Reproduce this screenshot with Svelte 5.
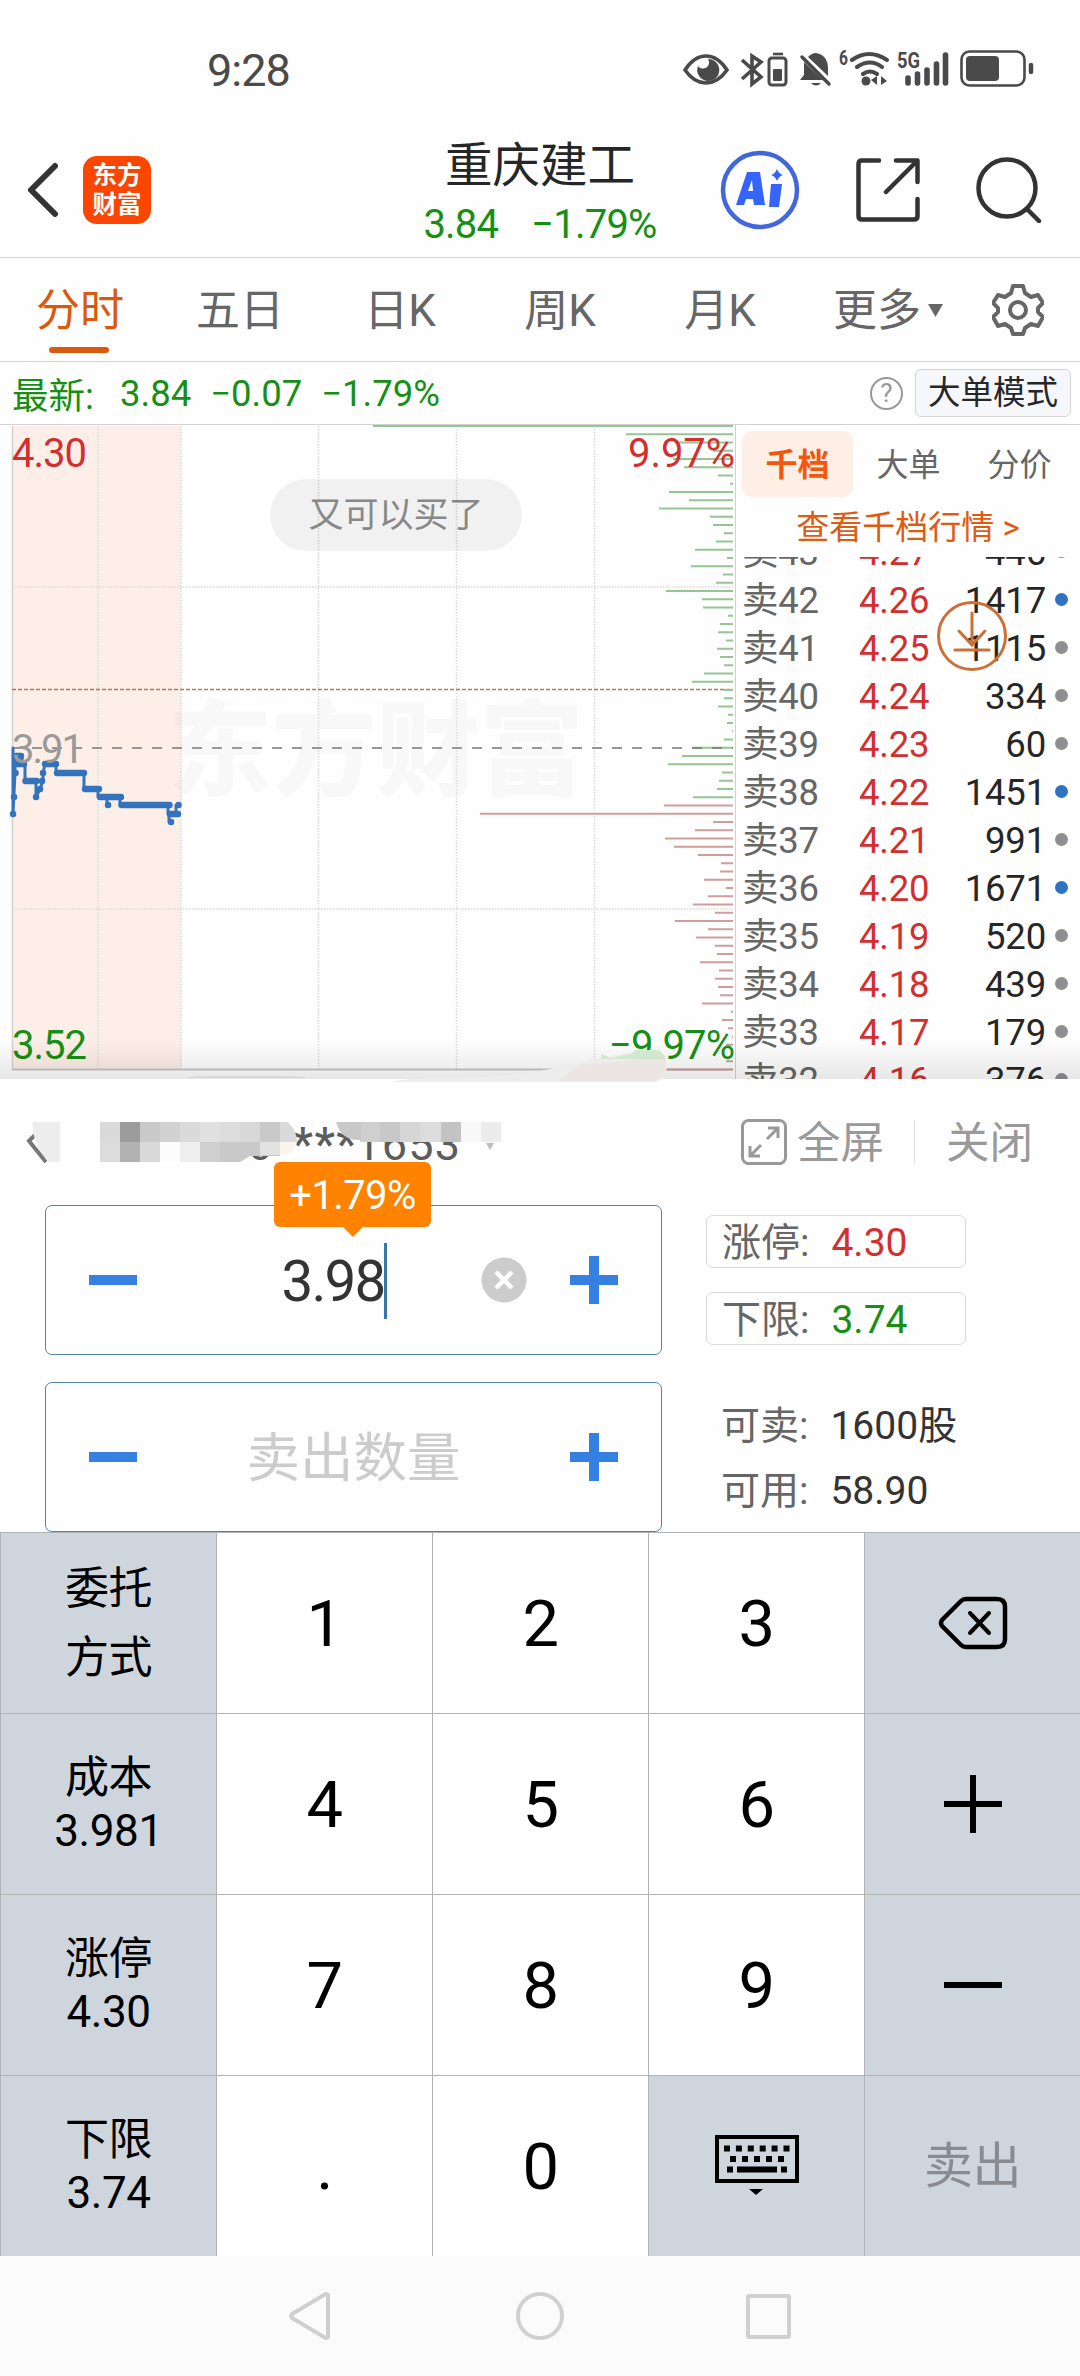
<script lang="ts">
  const TABS = ["分时", "五日", "日K", "周K", "月K"];

  // Volume at each price level, from the daily high down to the low
  const VOLUMES = [
    360, 107, 54, 20, 60, 49, 15, 3, 64, 44, 74, 23, 20, 9, 17, 38, 6, 42, 10,
    17, 67, 31, 30, 5, 13, 15, 7, 16, 13, 9, 29, 41, 9, 9, 15, 5, 6, 1, 9, 41,
    51, 65, 11, 14, 16, 40, 69, 253, 20, 38, 68, 59, 35, 12, 13, 29, 7, 25, 40,
    18, 58, 25, 37, 18, 16, 33, 14, 18, 15, 13, 31, 2, 11, 5, 1, 7, 2, 7, 110,
  ];
  const FIRST_BUY = 46;

  const ORDERS = [
    { level: 43, price: "4.27", volume: 446, big: false },
    { level: 42, price: "4.26", volume: 1417, big: true },
    { level: 41, price: "4.25", volume: 1115, big: false },
    { level: 40, price: "4.24", volume: 334, big: false },
    { level: 39, price: "4.23", volume: 60, big: false },
    { level: 38, price: "4.22", volume: 1451, big: true },
    { level: 37, price: "4.21", volume: 991, big: false },
    { level: 36, price: "4.20", volume: 1671, big: true },
    { level: 35, price: "4.19", volume: 520, big: false },
    { level: 34, price: "4.18", volume: 439, big: false },
    { level: 33, price: "4.17", volume: 179, big: false },
    { level: 32, price: "4.16", volume: 376, big: false },
  ];

  const KEYS = [
    { lines: ["委托", "方式"], kind: "side tall" },
    { lines: ["1"], kind: "digit" },
    { lines: ["2"], kind: "digit" },
    { lines: ["3"], kind: "digit" },
    { icon: "delete", kind: "side" },
    { lines: ["成本", "3.981"], kind: "side" },
    { lines: ["4"], kind: "digit" },
    { lines: ["5"], kind: "digit" },
    { lines: ["6"], kind: "digit" },
    { icon: "plus", kind: "side" },
    { lines: ["涨停", "4.30"], kind: "side" },
    { lines: ["7"], kind: "digit" },
    { lines: ["8"], kind: "digit" },
    { lines: ["9"], kind: "digit" },
    { icon: "minus", kind: "side" },
    { lines: ["下限", "3.74"], kind: "side" },
    { lines: ["."], kind: "digit" },
    { lines: ["0"], kind: "digit" },
    { icon: "keyboard", kind: "side" },
    { lines: ["卖出"], kind: "side sell" },
  ];

  // Masked account name: x, y, width, colour
  const MOSAIC: [number, number, number, string][] = [
    [100, 0, 20, "#dadada"], [120, 0, 20, "#9c9c9c"], [140, 0, 20, "#c9c9c9"],
    [160, 0, 20, "#d2d2d2"], [180, 0, 20, "#dadada"], [200, 0, 20, "#e0e0e0"],
    [220, 0, 20, "#dcdcdc"], [240, 0, 20, "#d8d8d8"], [260, 0, 20, "#c9c9c9"],
    [100, 20, 20, "#dcdcdc"], [120, 20, 20, "#b2b2b2"], [140, 20, 20, "#dadada"],
    [160, 20, 20, "#fcfcfc"], [180, 20, 20, "#eeeeee"], [200, 20, 20, "#cfcfcf"],
    [360, 0, 20, "#cfcfcf"], [380, 0, 20, "#c8c8c8"], [400, 0, 20, "#d6d6d6"],
    [420, 0, 21, "#dcdcdc"], [441, 0, 20, "#c3c3c3"], [461, 0, 20, "#f8f8f8"],
    [481, 0, 20, "#ececec"],
  ];

  let price = $state("3.98");
</script>

<div class="screen">
  <div class="status">
    <span class="clock">9:28</span>
    <svg class="status-icons" viewBox="680 46 356 44" width="356" height="44">
      <g fill="none" stroke="#4a4a4a" stroke-width="3.6">
        <path d="M685 70q9-14 21-14t21 14q-9 13-21 13t-21-13z" />
        <path d="M742 60l19 17-9 7V56l9 6-19 17" />
        <rect x="769" y="58" width="17" height="27" rx="3" stroke-width="3" />
        <path d="M773 54h10" stroke-width="2.6" />
        <path d="M852 60q17-12 35 0M857 67q13-9 25 0M863 74q7-5 14 0" stroke-width="4" stroke-linecap="round" />
        <rect x="961.5" y="51.5" width="63" height="34" rx="8" stroke-width="2.6" />
        <path d="M1031 65v7" stroke-width="4.5" stroke-linecap="round" />
        <path d="M908 78v5M917.5 74v9M927 70v13M936.5 64v19M945.5 55v28" stroke-width="5.6" stroke-linecap="round" />
      </g>
      <g fill="#4a4a4a">
        <path d="M698 66a11 11 0 1 0 10-7 6 6 0 1 1-10 7z" />
        <rect x="773" y="69" width="9" height="12" rx="1" />
        <path d="M808 57q4-4 8-4 12 2 12 16v7L808 57zM804 62l19 18h-23l4-5z" />
        <path d="M811 83h10q-5 5-10 0z" />
        <path d="M802 57l27 27" stroke="#4a4a4a" stroke-width="3.5" stroke-linecap="round" />
        <circle cx="866" cy="81" r="4.5" />
        <path d="M877 76v9l-6-5zM881 76l6 5-6 4z" />
        <rect x="966" y="56" width="33" height="25" rx="4" />
        <text x="839" y="65" font-size="20" font-weight="700" textLength="9" lengthAdjust="spacingAndGlyphs">6</text>
        <text x="897" y="68" font-size="22" font-weight="700" textLength="23" lengthAdjust="spacingAndGlyphs">5G</text>
      </g>
    </svg>
  </div>

  <header class="titlebar">
    <div class="title-left">
      <svg viewBox="0 0 32 56" width="32" height="56" fill="none" stroke="#333" stroke-width="6" stroke-linecap="round" stroke-linejoin="round">
        <path d="M28 4L4 28l24 24" />
      </svg>
      <div class="logo"><span>东方</span><span>财富</span></div>
    </div>
    <div class="title">
      <div class="name">重庆建工</div>
      <div class="quote"><span>3.84</span><span>−1.79%</span></div>
    </div>
    <div class="title-right">
      <svg viewBox="0 0 80 80" width="80" height="80">
        <circle cx="40" cy="40" r="37" fill="none" stroke="#4267dc" stroke-width="4.5" />
        <path d="M16 55L27 22h13l5 33H34l-1-6h-7l-2 6zM28 41h5l-1-11z" fill="#3564fa" fill-rule="evenodd" />
        <path d="M51 34h11l-3 23H49z" fill="#3564fa" />
        <path d="M57 19q2 5 6 6-4 1-6 6-2-5-6-6 4-1 6-6z" fill="#3564fa" />
      </svg>
      <svg viewBox="0 0 64 64" width="64" height="64" fill="none" stroke="#333" stroke-width="4.5" stroke-linecap="round" stroke-linejoin="round">
        <path d="M23 2.500H6Q2.500 2.500 2.500 6v52Q2.500 61.500 6 61.500h52q3.500 0 3.500-3.500V41" />
        <path d="M40 2.500h21.500V24M61 3L30 34" />
      </svg>
      <svg viewBox="0 0 66 66" width="66" height="66" fill="none" stroke="#333" stroke-width="4.5" stroke-linecap="round">
        <circle cx="31" cy="31" r="28.5" />
        <path d="M51 52l12 12" />
      </svg>
    </div>
  </header>

  <nav class="tabs">
    {#each TABS as tab, i}
      <span class="tab" class:active={i === 0}>{tab}</span>
    {/each}
    <span class="more">
      更多<svg viewBox="0 0 16 14" width="15" height="13"><path d="M0 0h16L8 14z" fill="#666" /></svg>
    </span>
    <svg class="gear" viewBox="-26 -26 52 52" width="52" height="52" fill="none" stroke="#666" stroke-width="4">
      <path d="M-5-24H5l2 7 6 4 7-2 5 8-5 5v4l5 5-5 9-7-2-6 4-2 6H-5l-2-6-6-4-7 2-5-9 5-5v-4l-5-5 5-8 7 2 6-4z" stroke-linejoin="round" />
      <circle r="8" />
    </svg>
  </nav>

  <div class="latest">
    <span class="label">最新:</span><span>3.84</span><span>−0.07</span><span>−1.79%</span>
    <i class="help">?</i>
    <button class="mode">大单模式</button>
  </div>

  <main class="market">
    <svg class="chart" viewBox="0 425 735 654" width="735" height="654">
      <rect x="12" y="426" width="169" height="643" fill="#fdeee7" />
      <text class="watermark" x="168" y="788" textLength="416">东方财富</text>
      <g stroke="#d9d9d9" stroke-width="1.5" stroke-dasharray="1.5 1.5">
        <path d="M98 426v643M181 426v643M318.500 426v643M456.500 426v643M594.500 426v643" />
        <path d="M12 587h721M12 909h721" />
      </g>
      <path d="M12.500 426v643" stroke="#d3d1d0" stroke-width="1.5" />
      <path d="M12 1069.500h721" stroke="#c6c6c6" stroke-width="2" />
      <path d="M12 689.500h721" stroke="#b9784f" stroke-width="1.4" stroke-dasharray="4 2" />
      {#each VOLUMES as width, i}
        <rect
          x={733 - width}
          y={425 + i * 8.25}
          {width}
          height="2"
          fill={i < FIRST_BUY ? "#95c495" : "#d09c9c"}
        />
      {/each}
      <path d="M12 748h721" stroke="#777" stroke-width="1.6" stroke-dasharray="10 10" />
      <rect x="270" y="479" width="252" height="72" rx="36" fill="#000" fill-opacity="0.05" />
      <text x="396" y="527" text-anchor="middle" font-size="35" fill="#888">又可以买了</text>
      <g fill="none" stroke="#3373bd" stroke-linecap="round" stroke-linejoin="round">
        <path
          d="M13 748v66l2-41v-18h7v9h3v17h11v16l4-8 3-8v-8l2-9h11v9h28v16h14v8h9v8v-8h13v8h48v9h1v8v-8h7v-9"
          stroke-width="3"
        />
        <path
          d="M13 814h.1M14 797h.1M15.500 773h.1M16 756h5M16 764h8M25.500 781h11M36 797h.1M40 789h.1M42 781h.1M43 773h.1M45 764h11M57 773h27M85 789h14M100 797h21M108 805h.1M121.500 805h48M170 814h8M171 822h.1M178.500 805h.1"
          stroke-width="6.4"
        />
      </g>
      <g class="axis">
        <text x="12" y="467" fill="#d32f2f" textLength="75">4.30</text>
        <text x="12" y="763" fill="#999" textLength="72">3.91</text>
        <text x="12" y="1059" fill="#159015" textLength="75">3.52</text>
        <text x="628" y="467" fill="#d32f2f" textLength="107">9.97%</text>
        <text x="609" y="1059" fill="#159015" textLength="126">−9.97%</text>
      </g>
    </svg>

    <section class="book">
      <div class="book-tabs">
        <span class="active">千档</span><span>大单</span><span>分价</span>
      </div>
      <div class="book-link">查看千档行情 &gt;</div>
      <div class="orders">
        {#each ORDERS as order}
          <div class="order">
            <span class="level">卖{order.level}</span>
            <span class="price">{order.price}</span>
            <span class="volume">{order.volume}</span>
            <span class="dot" class:big={order.big}></span>
          </div>
        {/each}
      </div>
      <svg class="jump" viewBox="-36 -36 72 72" width="72" height="72" fill="none" stroke="#cc7038" stroke-width="3" stroke-linecap="round">
        <circle r="33.5" />
        <path d="M0-23V9M-13-5L0 9 13-5M-17 14h34" />
      </svg>
    </section>
    <div class="shade"></div>
  </main>

  <section class="sheet">
    <div class="sheet-head">
      <svg class="back" viewBox="0 0 34 46" width="34" height="46" fill="none" stroke="#777" stroke-width="4"><path d="M20 6L5 21l17 21" /></svg>
      <span class="account">6<b>***</b>1653</span>
      <svg class="mask" viewBox="0 1050 700 120" width="700" height="120">
        <path d="M392 1082q10-4 60-4 70-1 110-12l50-10 45-9q10 8 10 20-2 14-12 15z" fill="#ededed" />
        <path d="M560 1081q5-7 22-16l60-6 24 0q1 20-12 22z" fill="#ede4e4" />
        <path d="M601 1058v-4l10 4 20-4 8-7q22-1 27 12h-65z" fill="#cfe8cf" />
        <path d="M186 1078q3-2 30-2h60q27 0 32 2z" fill="#d6d6d6" />
        <path d="M33 1122h27v40H48q-18-24-15-40z" fill="#ededed" />
        {#each MOSAIC as [x, y, w, fill]}
          <rect {x} y={1122 + y} width={w} height="20" {fill} />
        {/each}
        <path d="M220 1142h60v14h-30l-10 6h-20z" fill="#c9c9c9" />
        <path d="M260 1142h20v13h-20z" fill="#e2e2e2" />
        <path d="M280 1122h8q9 9 9 20h-17z" fill="#dadada" />
        <path d="M280 1142h17q-2 12-17 13z" fill="#fbf4ea" />
        <path d="M336 1122h25v18q-20 1-25-18z" fill="#c8c8c8" />
        <path d="M486 1143h8l-4 7z" fill="#bdbdbd" />
      </svg>
      <svg viewBox="0 0 46 46" width="46" height="46" fill="none" stroke="#999" stroke-width="3">
        <rect x="1.5" y="1.5" width="43" height="43" rx="6" />
        <path d="M26 20L37 9M27 9h10v10M20 26L9 37M9 27v10h10" />
      </svg>
      <span class="full">全屏</span>
      <span class="divider"></span>
      <span class="close">关闭</span>
    </div>

    <div class="form">
      <div class="steppers">
        <div class="stepper">
          <span class="minus"></span>
          <span class="value">{price}</span>
          <span class="caret"></span>
          <svg class="clear" viewBox="-23 -23 46 46" width="46" height="46">
            <circle r="22.5" fill="#ccc" />
            <path d="M-8-8L8 8M8-8L-8 8" stroke="#fff" stroke-width="4.5" />
          </svg>
          <span class="plus"></span>
          <div class="tip">+1.79%</div>
        </div>
        <div class="stepper">
          <span class="minus"></span>
          <span class="placeholder">卖出数量</span>
          <span class="plus"></span>
        </div>
      </div>
      <div class="limits">
        <div class="limit">涨停:<span class="up">4.30</span></div>
        <div class="limit">下限:<span class="down">3.74</span></div>
        <div class="holding first">可卖:<span>1600股</span></div>
        <div class="holding">可用:<span>58.90</span></div>
      </div>
    </div>
  </section>

  <div class="keypad">
    {#each KEYS as key}
      <button class="key {key.kind}">
        {#if key.icon === "delete"}
          <svg viewBox="0 0 70 54" width="70" height="54" fill="none" stroke="#000" stroke-width="4.5" stroke-linecap="round" stroke-linejoin="round">
            <path d="M28 3h31q8 0 8 8v32q0 8-8 8H28q-3 0-5-2L4 30q-2-3 0-6L23 5q2-2 5-2z" />
            <path d="M32 17l19 20M51 17L32 37" stroke-width="4" />
          </svg>
        {:else if key.icon === "plus"}
          <svg viewBox="0 0 58 58" width="58" height="58" stroke="#000" stroke-width="6"><path d="M0 29h58M29 0v58" /></svg>
        {:else if key.icon === "minus"}
          <svg viewBox="0 0 58 58" width="58" height="58" stroke="#000" stroke-width="6"><path d="M0 29h58" /></svg>
        {:else if key.icon === "keyboard"}
          <svg viewBox="0 0 84 62" width="84" height="62">
            <rect x="2" y="2" width="80" height="44" fill="none" stroke="#000" stroke-width="4" />
            <g fill="none" stroke="#000" stroke-width="6">
              <path d="M9 13.500h66" stroke-dasharray="6 5.9" />
              <path d="M15 24h56" stroke-dasharray="6 6" />
              <path d="M12 34.500h6M22 34.500h40M66 34.500h6" />
            </g>
            <path d="M34 54h14l-7 6z" />
          </svg>
        {:else}
          {#each key.lines ?? [] as line}
            <span>{line}</span>
          {/each}
        {/if}
      </button>
    {/each}
  </div>

  <div class="navbar">
    <svg viewBox="0 0 506 50" width="506" height="50" fill="none" stroke="#d0d0d0" stroke-width="4" stroke-linejoin="round">
      <path d="M41 4v42q-1 2-4 0L5 27q-2-2 0-4L37 4q3-2 4 0z" />
      <circle cx="253" cy="25" r="22" />
      <rect x="461" y="5" width="41" height="41" rx="1" />
    </svg>
  </div>
</div>

<style>
  :global(body) {
    background: #fff;
  }

  .screen {
    width: 1080px;
    height: 2376px;
    overflow: hidden;
    display: flex;
    flex-direction: column;
    background: #fefefe;
    font-family: Roboto, "Noto Sans CJK SC", sans-serif;
    color: #333;
  }

  svg {
    display: block;
    flex-shrink: 0;
  }

  button {
    font: inherit;
    border: none;
    padding: 0;
    margin: 0;
  }

  .status {
    height: 95px;
    flex-shrink: 0;
    display: flex;
    justify-content: space-between;
    align-items: flex-start;
    padding: 46px 44px 0 207px;
    box-sizing: border-box;
  }

  .clock {
    font-size: 45px;
    line-height: 49px;
    letter-spacing: -1px;
    color: #4a4a4a;
  }

  .titlebar {
    height: 163px;
    flex-shrink: 0;
    box-sizing: border-box;
    border-bottom: 1px solid #d2d2d2;
    display: grid;
    grid-template-columns: 1fr auto 1fr;
    align-items: center;
    padding: 0 38px 0 27px;
  }

  .title-left,
  .title-right {
    display: flex;
    align-items: center;
    margin-top: 28px;
  }

  .title-left {
    gap: 24px;
  }

  .title-right {
    justify-content: flex-end;
    gap: 56px;
  }

  .logo {
    width: 68px;
    height: 68px;
    border-radius: 14px;
    background: #fa4600;
    color: #fff;
    font-size: 24.5px;
    font-weight: 700;
    line-height: 29px;
    display: flex;
    flex-direction: column;
    align-items: center;
    justify-content: center;
  }

  .title {
    text-align: center;
    margin: 37px 0 0 11px;
  }

  .name {
    font-size: 47.5px;
    line-height: 60px;
    color: #262626;
  }

  .quote {
    display: flex;
    justify-content: center;
    gap: 33px;
    font-size: 40px;
    line-height: 58px;
    letter-spacing: -0.8px;
    color: #159015;
  }

  .tabs {
    height: 104px;
    flex-shrink: 0;
    box-sizing: border-box;
    border-bottom: 1px solid #d2d2d2;
    display: flex;
    align-items: center;
    padding-right: 36px;
    font-size: 44px;
    line-height: 60px;
    color: #666;
  }

  .tab {
    position: relative;
    width: 160px;
    padding-top: 2px;
    text-align: center;
  }

  .tab.active {
    color: #d9590f;
  }

  .tab.active::after {
    content: "";
    position: absolute;
    left: 49px;
    bottom: -12px;
    width: 60px;
    height: 6px;
    border-radius: 3px;
    background: #d9590f;
  }

  .more {
    display: flex;
    align-items: center;
    gap: 7px;
    margin-left: 33px;
    padding-top: 2px;
  }

  .gear {
    margin-left: auto;
  }

  .latest {
    height: 63px;
    flex-shrink: 0;
    box-sizing: border-box;
    border-bottom: 1px solid #d2d2d2;
    display: flex;
    align-items: center;
    gap: 19px;
    padding: 0 9px 0 12px;
    font-size: 36.5px;
    color: #159015;
  }

  .label {
    width: 89px;
  }

  .help {
    margin-left: auto;
    width: 29px;
    height: 29px;
    border: 2.5px solid #999;
    border-radius: 50%;
    font-style: normal;
    font-size: 26px;
    line-height: 29px;
    text-align: center;
    color: #999;
  }

  .mode {
    margin-left: -7px;
    width: 156px;
    height: 48px;
    box-sizing: border-box;
    border: 1px solid #d5d5d5;
    border-radius: 6px;
    background: #f6f7fb;
    font-size: 32.5px;
    line-height: 44px;
    color: #262626;
  }

  .market {
    position: relative;
    height: 654px;
    flex-shrink: 0;
    display: flex;
    overflow: hidden;
  }

  .watermark {
    font-size: 104px;
    font-weight: 900;
    fill: #000;
    fill-opacity: 0.025;
  }

  .axis {
    font-size: 40px;
  }

  .book {
    position: relative;
    width: 345px;
    box-sizing: border-box;
    border-left: 1px solid #d2d2d2;
    padding-left: 6px;
  }

  .book-tabs {
    display: flex;
    padding-top: 6px;
  }

  .book-tabs span {
    width: 111px;
    height: 66px;
    border-radius: 10px;
    text-align: center;
    font-size: 32px;
    line-height: 69px;
    color: #666;
  }

  .book-tabs .active {
    background: #fdeee6;
    color: #f2570d;
    font-weight: 700;
  }

  .book-link {
    height: 60px;
    text-align: center;
    font-size: 33px;
    line-height: 62px;
    color: #e05a10;
    padding-right: 6px;
  }

  .orders {
    height: 522px;
    overflow: hidden;
  }

  .order {
    display: grid;
    grid-template-columns: 117px 90px 97px 15px;
    align-items: center;
    height: 48px;
    font-size: 36.5px;
    line-height: 50px;
    letter-spacing: -0.2px;
  }

  .order:first-child {
    margin-top: -29px;
  }

  .level {
    color: #666;
  }

  .price {
    color: #d32f2f;
  }

  .volume {
    color: #262626;
    text-align: right;
  }

  .dot {
    width: 13px;
    height: 13px;
    margin: -4px 0 0 9px;
    border-radius: 50%;
    background: #8e8e93;
  }

  .dot.big {
    background: #2f72c4;
  }

  .jump {
    position: absolute;
    left: 200px;
    top: 175px;
  }

  .shade {
    position: absolute;
    left: 0;
    right: 0;
    bottom: 0;
    height: 40px;
    background: linear-gradient(rgba(0, 0, 0, 0), rgba(0, 0, 0, 0.09));
  }

  .sheet {
    height: 453px;
    flex-shrink: 0;
    position: relative;
  }

  .sheet-head {
    position: relative;
    height: 126px;
    display: flex;
    align-items: center;
    font-size: 43.5px;
    line-height: 60px;
    color: #999;
    padding: 0 47px 0 24px;
  }

  .back {
    margin-top: 2px;
  }

  .account {
    margin: 4px auto 0 189px;
    font-size: 45px;
    color: #5c5c5c;
    white-space: nowrap;
    letter-spacing: 1.2px;
  }

  .account b {
    font-weight: 500;
    font-size: 46px;
    letter-spacing: 1.5px;
    margin: 0 -3px 0 19px;
  }

  .mask {
    position: absolute;
    left: 0;
    top: -29px;
  }

  .full,
  .close {
    padding-top: 3px;
  }

  .full {
    margin-left: 10px;
  }

  .divider {
    width: 1px;
    height: 45px;
    background: #e3e3e3;
    margin: 0 31px 0 30px;
  }

  .form {
    display: flex;
    padding-left: 45px;
  }

  .stepper {
    position: relative;
    width: 617px;
    height: 150px;
    box-sizing: border-box;
    border: 1.5px solid #4d83a8;
    border-radius: 7px;
    display: grid;
    grid-template-columns: 48px 1fr 48px;
    align-items: center;
    padding: 0 43px;
  }

  .stepper + .stepper {
    margin-top: 27px;
  }

  .minus,
  .plus {
    width: 48px;
    height: 48px;
    background: linear-gradient(#3580e0, #3580e0) center / 48px 10px no-repeat;
  }

  .plus {
    grid-column: 3;
    background:
      linear-gradient(#3580e0, #3580e0) center / 48px 10px no-repeat,
      linear-gradient(#3580e0, #3580e0) center / 10px 48px no-repeat;
  }

  .value,
  .placeholder {
    text-align: center;
    line-height: 70px;
    padding-top: 4px;
  }

  .value {
    font-size: 56.5px;
    letter-spacing: -1.8px;
    color: #333;
    padding-right: 41px;
  }

  .placeholder {
    font-size: 53.5px;
    color: #ccc;
  }

  .caret {
    position: absolute;
    left: 338px;
    top: 37px;
    width: 3px;
    height: 76px;
    background: #3a76ac;
  }

  .clear {
    position: absolute;
    left: 435px;
    top: 51px;
  }

  .tip {
    position: absolute;
    left: 228px;
    top: -44px;
    width: 157px;
    height: 65px;
    border-radius: 6px;
    background: #ff8300;
    color: #fff;
    font-size: 40px;
    line-height: 68px;
    letter-spacing: -0.6px;
    text-align: center;
  }

  .tip::after {
    content: "";
    position: absolute;
    left: 69px;
    top: 65px;
    border: 10px solid transparent;
    border-top-color: #ff8300;
    border-bottom: none;
  }

  .limits {
    padding: 10px 0 0 44px;
    font-size: 39px;
    color: #666;
  }

  .limit,
  .holding {
    padding-left: 15px;
    line-height: 55px;
  }

  .limit {
    width: 260px;
    height: 53px;
    box-sizing: border-box;
    border: 1px solid #d6d8da;
    border-radius: 7px;
    margin-bottom: 24px;
  }

  .limit span,
  .holding span {
    margin-left: 22px;
  }

  .holding span {
    color: #333;
  }

  .holding {
    height: 65px;
    line-height: 65px;
  }

  .holding.first {
    margin-top: 49px;
  }

  .limit .up {
    color: #d32f2f;
  }

  .limit .down {
    color: #159015;
  }

  .keypad {
    height: 724px;
    flex-shrink: 0;
    display: grid;
    grid-template-columns: repeat(5, 216px);
    grid-template-rows: repeat(4, 181px);
  }

  .key {
    display: flex;
    flex-direction: column;
    align-items: center;
    justify-content: center;
    border-top: 1px solid #b0b2b4;
    border-left: 1px solid #b0b2b4;
    background: #fff;
    color: #000;
    font-size: 44px;
    line-height: 52px;
    letter-spacing: -0.4px;
  }

  .key.side {
    background: #ced5dd;
  }

  .key span {
    padding-top: 1px;
  }

  .key.tall {
    line-height: 68px;
  }

  .key.digit {
    font-size: 65px;
    line-height: 82px;
  }

  .key.sell {
    font-size: 49px;
    color: #888b90;
  }

  .navbar {
    height: 120px;
    flex-shrink: 0;
    background: #fbfbfb;
    display: flex;
    align-items: center;
    justify-content: center;
  }
</style>
